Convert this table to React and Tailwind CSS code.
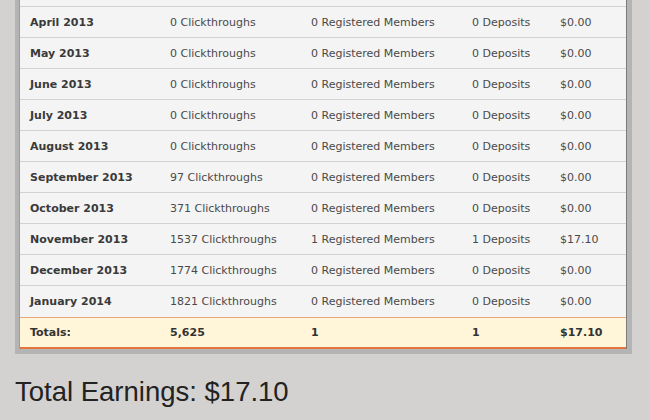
const rows = [
  { month: 'April 2013', clicks: 0, members: 0, deposits: 0, amount: '$0.00' },
  { month: 'May 2013', clicks: 0, members: 0, deposits: 0, amount: '$0.00' },
  { month: 'June 2013', clicks: 0, members: 0, deposits: 0, amount: '$0.00' },
  { month: 'July 2013', clicks: 0, members: 0, deposits: 0, amount: '$0.00' },
  { month: 'August 2013', clicks: 0, members: 0, deposits: 0, amount: '$0.00' },
  { month: 'September 2013', clicks: 97, members: 0, deposits: 0, amount: '$0.00' },
  { month: 'October 2013', clicks: 371, members: 0, deposits: 0, amount: '$0.00' },
  { month: 'November 2013', clicks: 1537, members: 1, deposits: 1, amount: '$17.10' },
  { month: 'December 2013', clicks: 1774, members: 0, deposits: 0, amount: '$0.00' },
  { month: 'January 2014', clicks: 1821, members: 0, deposits: 0, amount: '$0.00' },
];

const cols = 'grid grid-cols-[140px_141px_161px_88px_1fr] items-center pl-[10px] pt-[2px]';

export default function App() {
  return (
    <div className="min-h-screen overflow-hidden bg-[#d3d2d0] font-['Liberation_Sans',Arial,sans-serif]">
      <div className="ml-[15px] w-[617px] bg-[#b4b4b4] pb-[5px] pl-[4px] pr-[5px]">
        <div className="border-l border-r border-l-[#9c9c9c] border-r-[#7c7c7c] bg-[#f4f4f4] font-['DejaVu_Sans',Tahoma,sans-serif] text-[11px] text-[#4a4a4a]">
          {/* tail of the previous row, scrolled out of view */}
          <div className="h-[7px] border-b border-[#d2d2d2]" />
          {rows.map((row, i) => (
            <div
              key={row.month}
              className={`${cols} h-[31px] ${i < rows.length - 1 ? 'border-b border-[#d2d2d2]' : ''}`}
            >
              <span className="font-bold text-[#3a3a3a]">{row.month}</span>
              <span>{row.clicks} Clickthroughs</span>
              <span>{row.members} Registered Members</span>
              <span>{row.deposits} Deposits</span>
              <span>{row.amount}</span>
            </div>
          ))}
          <div className={`${cols} h-[32px] border-t border-b-2 border-t-[#e7a67e] border-b-[#e2743c] bg-[#fff5d8] font-bold text-[#333]`}>
            <span>Totals:</span>
            <span>5,625</span>
            <span>1</span>
            <span>1</span>
            <span>$17.10</span>
          </div>
        </div>
      </div>
      <h2 className="ml-[15px] mt-[17px] text-[27.5px] text-[#222]">Total Earnings: $17.10</h2>
    </div>
  );
}
